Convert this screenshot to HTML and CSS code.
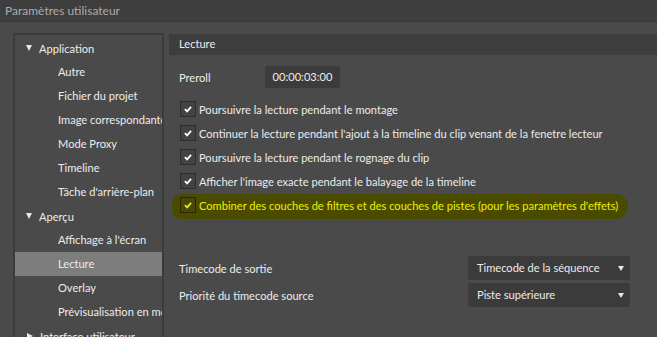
FILE: index.html
```html
<!DOCTYPE html>
<html lang="fr">
<head>
<meta charset="utf-8">
<title>Paramètres utilisateur</title>
<link rel="stylesheet" href="styles.css">
</head>
<body>
<div class="titlebar">Paramètres utilisateur</div>
<div class="main">
  <div class="tree">
    <div class="row group"><span class="tri down"></span>Application</div>
    <div class="row child">Autre</div>
    <div class="row child">Fichier du projet</div>
    <div class="row child">Image correspondante</div>
    <div class="row child">Mode Proxy</div>
    <div class="row child">Timeline</div>
    <div class="row child">Tâche d'arrière-plan</div>
    <div class="row group"><span class="tri down"></span>Aperçu</div>
    <div class="row child">Affichage à l'écran</div>
    <div class="row child selected">Lecture</div>
    <div class="row child">Overlay</div>
    <div class="row child">Prévisualisation en mode plein écran</div>
    <div class="row group"><span class="tri right"></span>Interface utilisateur</div>
  </div>
  <div class="content">
    <div class="section-head">Lecture</div>
    <div class="preroll">
      <span class="label">Preroll</span>
      <span class="timebox">00:00:03:00</span>
    </div>
    <div class="checks">
      <div class="check"><span class="box"><svg viewBox="0 0 16 16"><path d="M4.5 8.2 L7 10.7 L11.5 5.5" /></svg></span>Poursuivre la lecture pendant le montage</div>
      <div class="check"><span class="box"><svg viewBox="0 0 16 16"><path d="M4.5 8.2 L7 10.7 L11.5 5.5" /></svg></span>Continuer la lecture pendant l'ajout à la timeline du clip venant de la fenetre lecteur</div>
      <div class="check"><span class="box"><svg viewBox="0 0 16 16"><path d="M4.5 8.2 L7 10.7 L11.5 5.5" /></svg></span>Poursuivre la lecture pendant le rognage du clip</div>
      <div class="check"><span class="box"><svg viewBox="0 0 16 16"><path d="M4.5 8.2 L7 10.7 L11.5 5.5" /></svg></span>Afficher l'image exacte pendant le balayage de la timeline</div>
      <div class="check marked"><span class="box"><svg viewBox="0 0 16 16"><path d="M4.5 8.2 L7 10.7 L11.5 5.5" /></svg></span><span class="txt">Combiner des couches de filtres et des couches de pistes (pour les paramètres d'effets)</span></div>
    </div>
    <div class="selects">
      <div class="srow"><span class="label">Timecode de sortie</span><span class="dropdown">Timecode de la séquence<span class="arrow"></span></span></div>
      <div class="srow"><span class="label">Priorité du timecode source</span><span class="dropdown">Piste supérieure<span class="arrow"></span></span></div>
    </div>
  </div>
</div>
</body>
</html>
```

FILE: styles.css
```css
* { box-sizing: border-box; }
html, body {
  margin: 0;
  padding: 0;
  width: 657px;
  height: 337px;
  overflow: hidden;
  background: #4a4a4a;
  font-family: "Lato", "Liberation Sans", sans-serif;
  font-size: 11.1px;
  color: #ececec;
}
.titlebar {
  height: 22px;
  background: #3e3e3e;
  color: #acacac;
  font-size: 12px;
  line-height: 21px;
  padding-left: 5px;
  border-bottom: 1px solid #383838;
}
.main {
  display: flex;
  padding: 11px 0 0 13px;
  gap: 5px;
}
.tree {
  width: 151px;
  height: 320px;
  border: 2px solid #3b3b3b;
  padding-top: 1px;
  overflow: hidden;
  flex: none;
}
.row {
  height: 24px;
  line-height: 23px;
  white-space: nowrap;
  overflow: hidden;
}
.group { padding-left: 11px; display: flex; align-items: center; }
.child { padding-left: 43px; }
.selected { background: #7d7d7d; }
.tri { width: 0; height: 0; margin-right: 7px; display: inline-block; }
.tri.down { border-left: 3.5px solid transparent; border-right: 3.5px solid transparent; border-top: 6px solid #e8e8e8; }
.tri.right { border-top: 3.5px solid transparent; border-bottom: 3.5px solid transparent; border-left: 6px solid #e8e8e8; margin-left: 1px; }
.content {
  flex: 1;
  min-width: 0;
  padding-top: 1px;
  overflow: hidden;
}
.section-head {
  height: 21px;
  line-height: 20px;
  background: #3d3d3d;
  padding-left: 10px;
}
.preroll {
  display: flex;
  align-items: center;
  height: 22px;
  margin-top: 11px;
  padding-left: 10px;
}
.preroll .label { width: 86px; }
.timebox {
  width: 75px;
  height: 22px;
  line-height: 22px;
  text-align: center;
  background: #3c3c3c;
  border-radius: 2px;
}
.checks {
  margin-top: 9px;
  padding-left: 11px;
}
.check {
  display: flex;
  align-items: center;
  height: 24px;
  white-space: nowrap;
  position: relative;
  isolation: isolate;
}
.box {
  width: 16px;
  height: 16px;
  border: 1px solid #2e2e2e;
  background: #424242;
  margin-right: 3px;
  display: flex;
  flex: none;
}
.box svg { width: 14px; height: 14px; }
.box path { fill: none; stroke: #ffffff; stroke-width: 2; }
.marked { color: #eeee00; }
.marked .box { background: #46460f; border-color: #2a2a00; }
.marked .box path { stroke: #eeee00; }
.marked::before {
  content: "";
  position: absolute;
  left: -8px;
  top: 1px;
  width: 456px;
  height: 25px;
  background: #4b4b00;
  border-radius: 10px 14px 12px 8px / 10px 12px 14px 10px;
  z-index: -1;
}
.selects {
  margin-top: 39px;
  padding-left: 10px;
}
.srow {
  display: flex;
  align-items: center;
  justify-content: space-between;
  height: 24px;
  margin-bottom: 3px;
  padding-right: 27px;
}
.dropdown {
  width: 162px;
  height: 24px;
  line-height: 24px;
  background: #3b3b3b;
  border-radius: 2px;
  padding-left: 9px;
  position: relative;
}
.arrow {
  position: absolute;
  right: 6px;
  top: 10px;
  border-left: 3.5px solid transparent;
  border-right: 3.5px solid transparent;
  border-top: 5px solid #e8e8e8;
}
```
